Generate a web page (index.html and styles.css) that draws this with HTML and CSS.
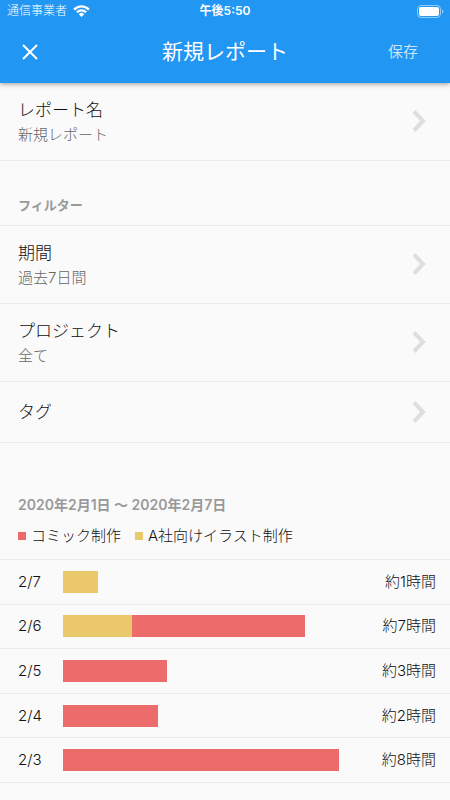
FILE: index.html
```html
<!DOCTYPE html>
<html lang="ja">
<head>
<meta charset="utf-8">
<meta name="viewport" content="width=device-width, initial-scale=1">
<title>新規レポート</title>
<link rel="stylesheet" href="styles.css">
</head>
<body>
<header class="header">
  <div class="status">
    <div class="carrier">
      <span>通信事業者</span>
      <svg class="wifi" viewBox="0 0 17 12" aria-hidden="true">
        <path d="M1.1 4.6 A10.2 10.2 0 0 1 15.9 4.6"/>
        <path d="M3.9 7.3 A6.4 6.4 0 0 1 13.1 7.3"/>
        <path class="dot" d="M8.5 11.9 L5.8 9.2 A3.8 3.8 0 0 1 11.2 9.2 Z"/>
      </svg>
    </div>
    <time class="clock">午後5:50</time>
    <svg class="battery" viewBox="0 0 27 13" aria-hidden="true">
      <rect class="shell" x="0.5" y="0.5" width="23" height="12" rx="3.5"/>
      <rect class="charge" x="2" y="2" width="20" height="9" rx="2"/>
      <path class="cap" d="M25 4.5 Q26.5 5 26.5 6.5 Q26.5 8 25 8.5 Z"/>
    </svg>
  </div>
  <div class="toolbar">
    <button class="close" type="button" aria-label="閉じる">
      <svg viewBox="0 0 16 16" aria-hidden="true"><path d="M1 1 L15 15 M15 1 L1 15"/></svg>
    </button>
    <h1 class="title">新規レポート</h1>
    <button class="save" type="button">保存</button>
  </div>
</header>
<main>
  <a class="item" href="#name">
    <span class="texts"><span class="name">レポート名</span><span class="value">新規レポート</span></span>
    <svg class="chevron" viewBox="0 0 14 22" aria-hidden="true"><path d="M2 1.5 L11 11 L2 20.5"/></svg>
  </a>
  <h2 class="heading filter-heading">フィルター</h2>
  <a class="item" href="#period">
    <span class="texts"><span class="name">期間</span><span class="value">過去7日間</span></span>
    <svg class="chevron" viewBox="0 0 14 22" aria-hidden="true"><path d="M2 1.5 L11 11 L2 20.5"/></svg>
  </a>
  <a class="item" href="#project">
    <span class="texts"><span class="name">プロジェクト</span><span class="value">全て</span></span>
    <svg class="chevron" viewBox="0 0 14 22" aria-hidden="true"><path d="M2 1.5 L11 11 L2 20.5"/></svg>
  </a>
  <a class="item single" href="#tag">
    <span class="texts"><span class="name">タグ</span></span>
    <svg class="chevron" viewBox="0 0 14 22" aria-hidden="true"><path d="M2 1.5 L11 11 L2 20.5"/></svg>
  </a>
  <section class="summary">
    <h2 class="heading period">2020年2月1日 〜 2020年2月7日</h2>
    <ul class="legend">
      <li><span class="swatch comic"></span>コミック制作</li>
      <li><span class="swatch illust"></span>A社向けイラスト制作</li>
    </ul>
  </section>
  <ul class="chart">
    <li class="day"><span>2/7</span><span class="track"><span class="illust" style="width:12.5%"></span></span><span class="hours">約1時間</span></li>
    <li class="day"><span>2/6</span><span class="track"><span class="illust" style="width:25%"></span><span class="comic" style="width:62.5%"></span></span><span class="hours">約7時間</span></li>
    <li class="day"><span>2/5</span><span class="track"><span class="comic" style="width:37.5%"></span></span><span class="hours">約3時間</span></li>
    <li class="day"><span>2/4</span><span class="track"><span class="comic" style="width:34.4%"></span></span><span class="hours">約2時間</span></li>
    <li class="day"><span>2/3</span><span class="track"><span class="comic" style="width:100%"></span></span><span class="hours">約8時間</span></li>
  </ul>
</main>
</body>
</html>
```
FILE: styles.css
```css
* { box-sizing: border-box; }
body {
  margin: 0;
  background: #fafafa;
  color: #111;
  font-family: Inter, "Noto Sans CJK JP", sans-serif;
  font-size: 15px;
  font-weight: 300;
  line-height: 20px;
}
h1, h2, ul { margin: 0; padding: 0; }
ul { list-style: none; }
button {
  border: 0;
  padding: 0;
  background: none;
  color: inherit;
  font: inherit;
}
.header {
  position: relative;
  background: #2196f3;
  color: #fff;
  box-shadow: 0 1px 5px rgba(0, 0, 0, 0.4);
}
.status {
  display: grid;
  grid-template-columns: 1fr auto 1fr;
  align-items: center;
  height: 22px;
  padding: 0 6px;
  font-size: 12px;
}
.carrier { display: flex; align-items: center; gap: 6px; padding-left: 1px; }
.wifi { width: 17px; height: 12px; fill: none; stroke: #fff; stroke-width: 2.3; }
.wifi .dot { fill: #fff; stroke: none; }
.clock { font-weight: 600; }
.battery { width: 27px; height: 13px; justify-self: end; }
.shell { fill: none; stroke: #fff; stroke-opacity: 0.5; }
.charge { fill: #fff; }
.cap { fill: #fff; fill-opacity: 0.5; }
.toolbar {
  display: grid;
  grid-template-columns: 1fr auto 1fr;
  align-items: center;
  height: 61px;
  padding-bottom: 1px;
}
.close { display: flex; width: 16px; height: 16px; margin-left: 22px; }
.close svg { width: 16px; height: 16px; fill: none; stroke: #fff; stroke-width: 2; }
.title { font-size: 21px; font-weight: 400; line-height: 28px; }
.save { justify-self: end; margin-right: 32px; color: rgba(255, 255, 255, 0.75); font-weight: 400; }
.item {
  display: flex;
  align-items: center;
  justify-content: space-between;
  min-height: 78px;
  padding: 0 24px 2px 18px;
  border-bottom: 1px solid #ececec;
  color: inherit;
  text-decoration: none;
}
.single { min-height: 61px; padding-bottom: 0; }
.texts { display: flex; flex-direction: column; }
.name { font-size: 17px; line-height: 28px; }
.value { line-height: 22px; color: #666; }
.chevron { width: 14px; height: 22px; fill: none; stroke: #dedede; stroke-width: 4; }
.heading { font-size: 13px; font-weight: 600; line-height: 20px; color: #999; }
.period { font-size: 14px; }
.filter-heading { padding: 34px 18px 10px; border-bottom: 1px solid #ececec; }
.summary { padding: 52px 18px 13px; border-bottom: 1px solid #ececec; }
.legend { display: flex; flex-wrap: wrap; gap: 14px; margin-top: 11px; }
.legend li { display: flex; align-items: center; gap: 5px; }
.swatch { width: 8px; height: 8px; }
.comic { background: #ec6b6b; }
.illust { background: #eac86b; }
.chart { display: grid; grid-auto-rows: 1fr; min-height: 223px; }
.day {
  display: grid;
  grid-template-columns: 45px 1fr 97px;
  align-items: center;
  padding: 0 14px 0 18px;
  border-bottom: 1px solid #ececec;
}
.track { display: flex; height: 22px; }
.hours { text-align: right; }
```
